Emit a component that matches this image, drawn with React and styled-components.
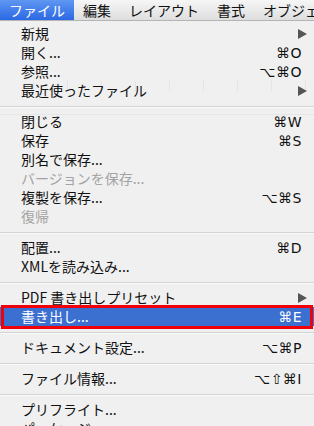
import styled, { createGlobalStyle } from "styled-components";

const GlobalStyle = createGlobalStyle`
  html, body {
    margin: 0;
    padding: 0;
    background: #efefef;
  }
  body {
    font-family: "Noto Sans CJK JP", "Liberation Sans", sans-serif;
    overflow: hidden;
  }
`;

const Screen = styled.div`
  width: 314px;
  height: 426px;
  overflow: hidden;
  display: flex;
  flex-direction: column;
`;

const MenuBar = styled.div`
  display: flex;
  height: 21px;
  flex-shrink: 0;
  background: linear-gradient(#f6f6f6, #dedede);
  border-bottom: 1px solid #b4b4b4;
  box-sizing: border-box;
  white-space: nowrap;
`;

const BarItem = styled.div`
  padding: 0 9px;
  font-size: 14px;
  line-height: 20px;
  color: ${(p) => (p.$active ? "#fff" : "#111")};
  background: ${(p) =>
    p.$active ? "linear-gradient(#5f97f2, #2b68e4)" : "transparent"};
`;

const Menu = styled.div`
  flex: 1;
  padding-top: 3px;
  background-color: rgba(240, 240, 240, 0.97);
  background-image: linear-gradient(
      to bottom,
      transparent 93px,
      #e6e6e6 93px,
      #e6e6e6 94px,
      transparent 94px
    ),
    repeating-linear-gradient(
      to right,
      transparent 0,
      transparent 33px,
      #e4e4e4 33px,
      #e4e4e4 34px
    );
  background-size: 100% 100%, 100% 10px;
  background-position: 0 0, 0 60px;
  background-repeat: no-repeat;
`;

const Row = styled.div`
  position: relative;
  display: flex;
  align-items: center;
  height: 19px;
  padding: 0 12px 0 21px;
  font-size: 14px;
  color: ${(p) => (p.$disabled ? "#a3a3a3" : p.$selected ? "#fff" : "#111")};
  background: ${(p) => (p.$selected ? "#3b6fd0" : "transparent")};

  ${(p) =>
    p.$selected &&
    `
    &::after {
      content: "";
      position: absolute;
      left: 1px;
      right: 1px;
      top: -2px;
      bottom: -3px;
      border: 3px solid #f2000a;
    }
  `}
`;

const Label = styled.span`
  flex: 1;
  white-space: nowrap;
  line-height: 19px;
`;

const Shortcut = styled.span`
  font-family: "DejaVu Sans", "Liberation Sans", sans-serif;
  font-size: 14px;
  letter-spacing: 0.5px;
  color: ${(p) => (p.$selected ? "#fff" : "#111")};
`;

const Arrow = styled.span`
  width: 0;
  height: 0;
  margin-right: -5px;
  border-top: 5px solid transparent;
  border-bottom: 5px solid transparent;
  border-left: 9px solid #555;
`;

const Separator = styled.div`
  height: 1px;
  margin: 6px 0 5px;
  background: #d3d3d3;
  box-shadow: 0 1px 0 #fafafa;
`;

const groups = [
  [
    { label: "新規", sub: true },
    { label: "開く...", key: "⌘O" },
    { label: "参照...", key: "⌥⌘O" },
    { label: "最近使ったファイル", sub: true },
  ],
  [
    { label: "閉じる", key: "⌘W" },
    { label: "保存", key: "⌘S" },
    { label: "別名で保存..." },
    { label: "バージョンを保存...", disabled: true },
    { label: "複製を保存...", key: "⌥⌘S" },
    { label: "復帰", disabled: true },
  ],
  [
    { label: "配置...", key: "⌘D" },
    { label: "XMLを読み込み..." },
  ],
  [
    { label: "PDF 書き出しプリセット", sub: true },
    { label: "書き出し...", key: "⌘E", selected: true },
  ],
  [{ label: "ドキュメント設定...", key: "⌥⌘P" }],
  [{ label: "ファイル情報...", key: "⌥⇧⌘I" }],
  [{ label: "プリフライト..." }, { label: "パッケージ..." }],
];

const barItems = ["ファイル", "編集", "レイアウト", "書式", "オブジェクト"];

export default function App() {
  return (
    <Screen>
      <GlobalStyle />
      <MenuBar>
        {barItems.map((t, i) => (
          <BarItem key={t} $active={i === 0}>
            {t}
          </BarItem>
        ))}
      </MenuBar>
      <Menu>
        {groups.map((g, gi) => (
          <div key={gi}>
            {gi > 0 && <Separator />}
            {g.map((item) => (
              <Row
                key={item.label}
                $disabled={item.disabled}
                $selected={item.selected}
              >
                <Label>{item.label}</Label>
                {item.key && (
                  <Shortcut $selected={item.selected}>{item.key}</Shortcut>
                )}
                {item.sub && <Arrow />}
              </Row>
            ))}
          </div>
        ))}
      </Menu>
    </Screen>
  );
}
